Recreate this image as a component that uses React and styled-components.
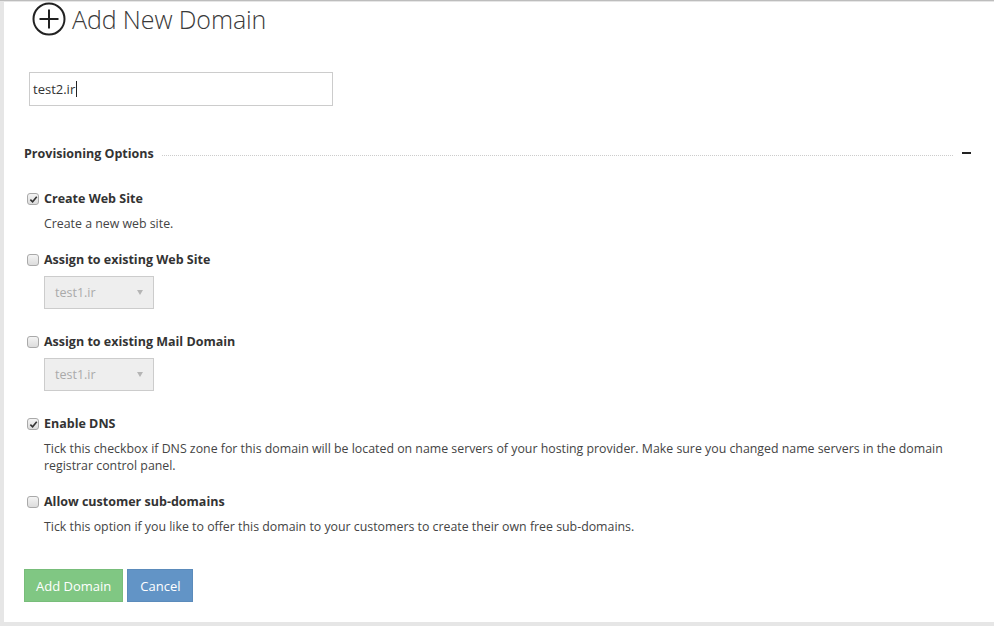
import React from 'react';
import styled, { createGlobalStyle } from 'styled-components';

const GlobalStyle = createGlobalStyle`
  html, body {
    margin: 0;
    padding: 0;
    background: #e6e6e6;
  }
  body {
    font-family: "Open Sans", "Noto Sans", sans-serif;
    color: #333;
  }
`;

const Page = styled.div`
  width: 994px;
  height: 626px;
  box-sizing: border-box;
  padding: 1px 0 4px 4px;
  border-top: 1px solid #bdbdbd;
  background: #e6e6e6;
  overflow: hidden;
`;

const Panel = styled.div`
  background: #fff;
  height: 100%;
  box-sizing: border-box;
  padding: 0 23px 0 20px;
`;

const Title = styled.h1`
  display: flex;
  align-items: center;
  gap: 6px;
  margin: 0 0 36px 8px;
  font-size: 25px;
  font-weight: 300;
  color: #3a3a3a;
  letter-spacing: -0.1px;
  line-height: 34px;
`;

const DomainInput = styled.div`
  margin-left: 5px;
  width: 304px;
  height: 34px;
  box-sizing: border-box;
  border: 1px solid #ccc;
  padding: 0 3px;
  display: flex;
  align-items: center;
  font-size: 13px;
  color: #333;
`;

const Caret = styled.span`
  display: inline-block;
  width: 1px;
  height: 16px;
  background: #222;
  margin-left: 1px;
`;

const SectionHead = styled.div`
  display: flex;
  align-items: center;
  margin-top: 37px;
  height: 20px;
`;

const SectionTitle = styled.span`
  font-size: 12.5px;
  font-weight: 700;
  white-space: nowrap;
`;

const Dots = styled.span`
  flex: 1;
  margin: 4px 9px 0 8px;
  border-top: 1px dotted #ccc;
`;

const Collapse = styled.span`
  width: 9px;
  height: 2px;
  background: #222;
`;

const Options = styled.div`
  padding-left: 3px;
  margin-top: 27px;
`;

const Option = styled.div`
  margin-bottom: ${(p) => p.gap}px;
`;

const Label = styled.label`
  display: flex;
  align-items: center;
  gap: 5px;
  font-size: 12.5px;
  font-weight: 700;
  line-height: 18px;
`;

const Box = styled.span`
  width: 12px;
  height: 12px;
  box-sizing: border-box;
  border: 1px solid #a9a9a9;
  border-radius: 3px;
  background: linear-gradient(#f4f4f4, #dcdcdc);
  display: flex;
  align-items: center;
  justify-content: center;
`;

const Desc = styled.p`
  margin: 7px 0 0 17px;
  font-size: 12.35px;
  line-height: 17px;
  color: #444;
`;

const Select = styled.div`
  margin: 7px 0 0 17px;
  width: 110px;
  height: 33px;
  box-sizing: border-box;
  border: 1px solid #ccc;
  background: #eee;
  display: flex;
  align-items: center;
  justify-content: space-between;
  padding: 0 10px;
  font-size: 12.5px;
  color: #aaa;
`;

const Arrow = styled.span`
  width: 0;
  height: 0;
  border-left: 3px solid transparent;
  border-right: 3px solid transparent;
  border-top: 5px solid #b5b5b5;
`;

const Buttons = styled.div`
  display: flex;
  gap: 4px;
  margin-top: 34px;
`;

const Button = styled.button`
  height: 33px;
  padding: 0 ${(p) => p.pad}px;
  border: 1px solid ${(p) => p.border};
  background: ${(p) => p.bg};
  color: #fff;
  font-family: inherit;
  font-size: 13px;
`;

const Check = ({ checked }) => (
  <Box>
    {checked && (
      <svg width="9" height="9" viewBox="0 0 10 10">
        <path d="M1.5 5.2 L4 7.6 L8.6 2" fill="none" stroke="#333" strokeWidth="1.8" />
      </svg>
    )}
  </Box>
);

const PlusCircle = () => (
  <svg width="34" height="34" viewBox="0 0 34 34">
    <circle cx="17" cy="17" r="15.5" fill="none" stroke="#222" strokeWidth="2" />
    <path d="M17 7.5 V26.5 M7.5 17 H26.5" stroke="#222" strokeWidth="2" />
  </svg>
);

export default function App() {
  return (
    <>
      <GlobalStyle />
      <Page>
        <Panel>
          <Title>
            <PlusCircle />
            Add New Domain
          </Title>
          <DomainInput>
            test2.ir
            <Caret />
          </DomainInput>
          <SectionHead>
            <SectionTitle>Provisioning Options</SectionTitle>
            <Dots />
            <Collapse />
          </SectionHead>
          <Options>
            <Option gap={19}>
              <Label>
                <Check checked />
                Create Web Site
              </Label>
              <Desc>Create a new web site.</Desc>
            </Option>
            <Option gap={24}>
              <Label>
                <Check />
                Assign to existing Web Site
              </Label>
              <Select>
                test1.ir
                <Arrow />
              </Select>
            </Option>
            <Option gap={24}>
              <Label>
                <Check />
                Assign to existing Mail Domain
              </Label>
              <Select>
                test1.ir
                <Arrow />
              </Select>
            </Option>
            <Option gap={19}>
              <Label>
                <Check checked />
                Enable DNS
              </Label>
              <Desc>
                Tick this checkbox if DNS zone for this domain will be located on name servers of your
                hosting provider. Make sure you changed name servers in the domain registrar control
                panel.
              </Desc>
            </Option>
            <Option gap={0}>
              <Label>
                <Check />
                Allow customer sub-domains
              </Label>
              <Desc>
                Tick this option if you like to offer this domain to your customers to create their own
                free sub-domains.
              </Desc>
            </Option>
          </Options>
          <Buttons>
            <Button bg="#80c783" border="#78bd7a" pad={11}>Add Domain</Button>
            <Button bg="#6294c6" border="#5b8bbb" pad={12}>Cancel</Button>
          </Buttons>
        </Panel>
      </Page>
    </>
  );
}
